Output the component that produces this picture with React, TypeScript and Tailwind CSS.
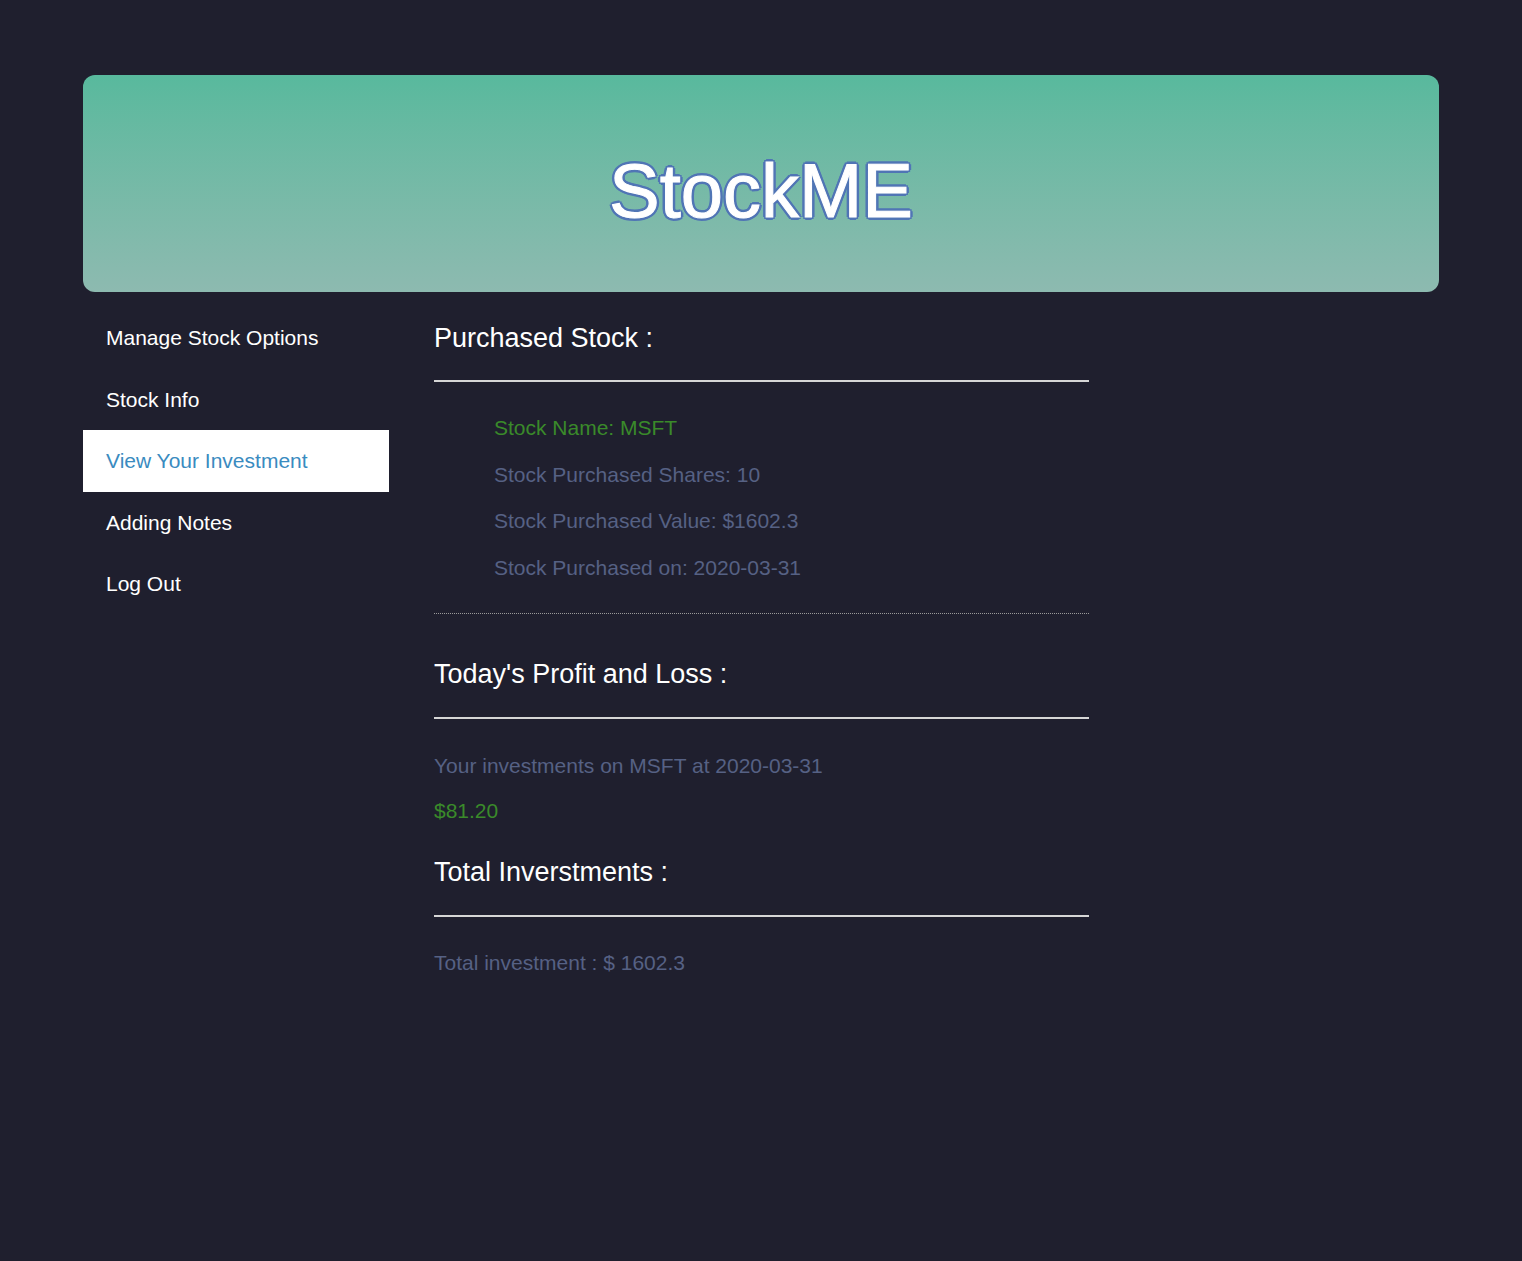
import React from "react";

const navItems = ["Manage Stock Options", "Stock Info", "View Your Investment", "Adding Notes", "Log Out"];

export default function App() {
  return (
    <div className="min-h-[1261px] w-full bg-[#1f1f2e] font-['Liberation_Sans',Arial,sans-serif] pt-[75px] px-[83px]">
      <header className="h-[217px] rounded-[12px] bg-gradient-to-b from-[#58b99d] to-[#8dbab0] flex items-center justify-center">
        <h1 className="text-[76px] leading-none text-white mt-[14px] [-webkit-text-stroke:1px_#ffffff] [text-shadow:3px_0_0_#5075b5,-3px_0_0_#5075b5,0_3px_0_#5075b5,0_-3px_0_#5075b5,2px_2px_0_#5075b5,-2px_-2px_0_#5075b5,2px_-2px_0_#5075b5,-2px_2px_0_#5075b5]">
          StockME
        </h1>
      </header>
      <div className="flex mt-[15px]">
        <nav className="w-[306px] shrink-0 flex flex-col">
          {navItems.map((item) => {
            const active = item === "View Your Investment";
            return (
              <div
                key={item}
                className={
                  active
                    ? "h-[61.6px] flex items-center pl-[23px] text-[21px] bg-white text-[#3a8bc0]"
                    : "h-[61.6px] flex items-center pl-[23px] text-[21px] text-white"
                }
              >
                {item}
              </div>
            );
          })}
        </nav>
        <main className="ml-[45px] w-[655px] pt-[15.5px] flex flex-col">
          <h2 className="text-[27px] leading-[31px] text-white">Purchased Stock :</h2>
          <div className="mt-[26.5px] h-[2px] bg-[#d6d6d6]" />
          <ul className="mt-[34px] pl-[60px] flex flex-col gap-[22.6px]">
            <li className="text-[21px] leading-[24px] text-[#3a8a2a]">Stock Name: MSFT</li>
            <li className="text-[21px] leading-[24px] text-[#566184]">Stock Purchased Shares: 10</li>
            <li className="text-[21px] leading-[24px] text-[#566184]">Stock Purchased Value: $1602.3</li>
            <li className="text-[21px] leading-[24px] text-[#566184]">Stock Purchased on: 2020-03-31</li>
          </ul>
          <div className="mt-[33px] border-t border-dotted border-[#9a9a9a]" />
          <h2 className="mt-[45.5px] text-[27px] leading-[31px] text-white">Today's Profit and Loss :</h2>
          <div className="mt-[26.5px] h-[2px] bg-[#d6d6d6]" />
          <p className="mt-[35px] text-[21px] leading-[24px] text-[#566184]">Your investments on MSFT at 2020-03-31</p>
          <p className="mt-[21px] text-[21px] leading-[24px] text-[#3a8a2a]">$81.20</p>
          <h2 className="mt-[34.5px] text-[27px] leading-[31px] text-white">Total Inverstments :</h2>
          <div className="mt-[27px] h-[2px] bg-[#d6d6d6]" />
          <p className="mt-[34px] text-[21px] leading-[24px] text-[#566184]">Total investment : $ 1602.3</p>
        </main>
      </div>
    </div>
  );
}
